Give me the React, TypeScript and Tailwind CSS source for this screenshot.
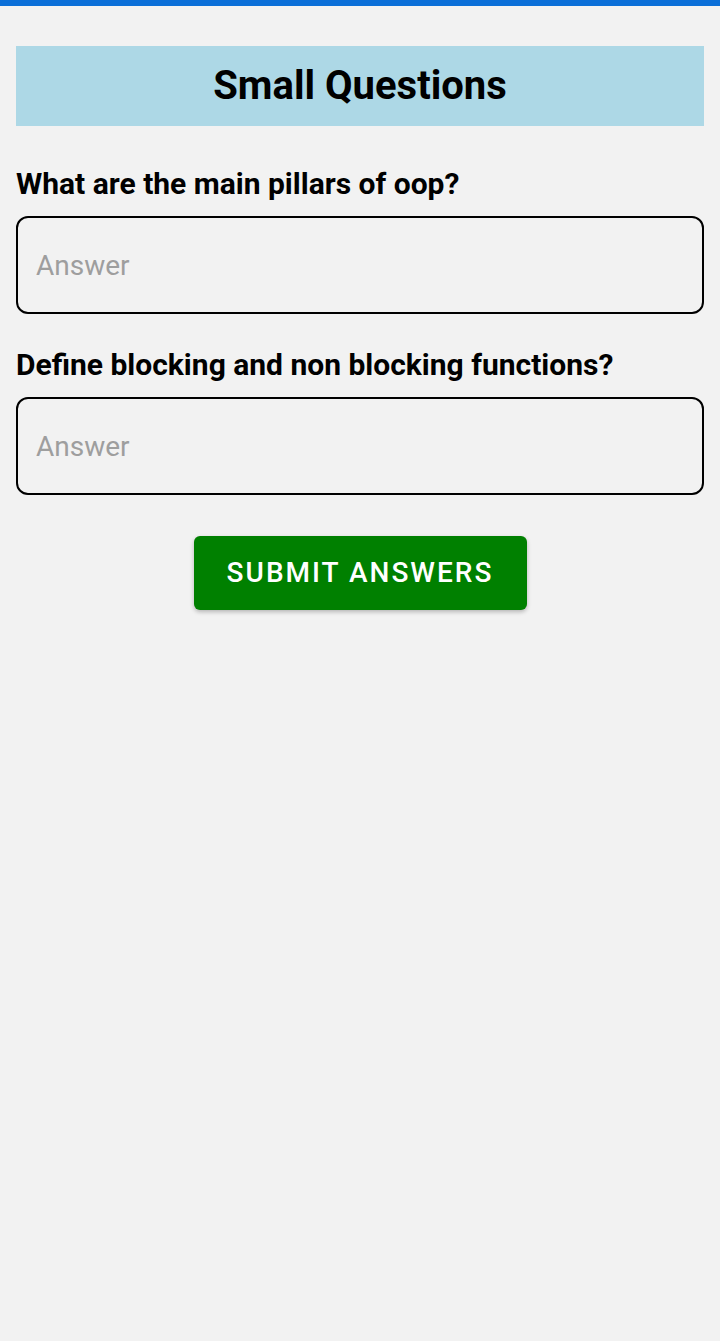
import { useState } from "react";

const questions = [
  "What are the main pillars of oop?",
  "Define blocking and non blocking functions?",
];

export default function App() {
  const [answers, setAnswers] = useState<string[]>(questions.map(() => ""));

  return (
    <div className="min-h-[1341px] bg-[#f2f2f2] font-['Roboto',sans-serif] text-black">
      <div className="h-[6px] bg-[#0b6fd8]" />
      <div className="px-4 pt-10">
        <div className="flex h-[80px] items-center justify-center bg-[#add8e6]">
          <h1 className="text-[40px] font-bold leading-none">Small Questions</h1>
        </div>

        {questions.map((q, i) => (
          <div key={q} className={i === 0 ? "mt-[38px]" : "mt-[31px]"}>
            <label className="block text-[30px] font-bold leading-[40px]">{q}</label>
            <input
              value={answers[i]}
              onChange={(e) =>
                setAnswers((a) => a.map((v, j) => (j === i ? e.target.value : v)))
              }
              placeholder="Answer"
              className="mt-[12px] h-[98px] w-full rounded-[12px] border-2 border-black bg-transparent px-[18px] text-[28px] outline-none placeholder:text-[#9e9e9e]"
            />
          </div>
        ))}

        <div className="mt-[41px] flex justify-center">
          <button className="h-[74px] w-[333px] rounded-[6px] bg-[#008000] text-[28px] font-medium tracking-[2px] text-white shadow-[0_2px_4px_rgba(0,0,0,0.25)]">
            SUBMIT ANSWERS
          </button>
        </div>
      </div>
    </div>
  );
}
